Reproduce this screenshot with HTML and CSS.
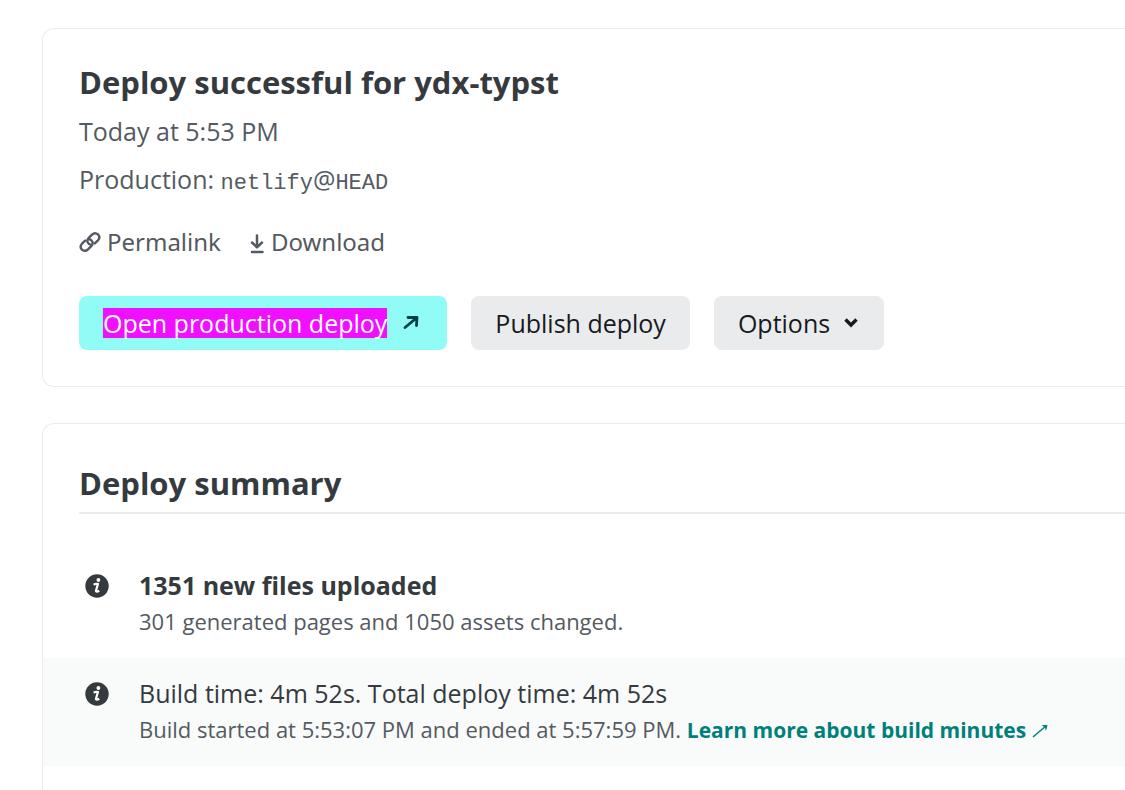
FILE: index.html
```html
<!DOCTYPE html>
<html lang="en">
<head>
<meta charset="utf-8">
<title>Deploy details</title>
<link rel="stylesheet" href="styles.css">
</head>
<body>
<main class="page">
  <section class="card deploy">
    <h1 class="title">Deploy successful for ydx-typst</h1>
    <p class="meta">Today at 5:53 PM</p>
    <p class="meta">Production: <code class="ref">netlify</code>@<code class="ref">HEAD</code></p>
    <div class="links">
      <a class="link" href="#">
        <svg class="icon-link" viewBox="0 0 22 22" aria-hidden="true"><g fill="none" stroke="currentColor" stroke-width="2.4" stroke-linecap="round" stroke-linejoin="round"><path d="M12.500 14C9 13.500 7 10 9.500 7.200L13 3.700C14.800 1.900 17.200 1.900 19 3.400C20.700 5.200 20.600 7.600 19 9.300L15.800 12.400"/><path d="M9.500 8C13 8.500 15 12 12.500 14.800L9 18.300C7.200 20.100 4.800 20.100 3 18.600C1.300 16.800 1.400 14.400 3 12.700L6.200 9.600"/></g></svg>
        Permalink</a>
      <a class="link" href="#">
        <svg class="icon-down" viewBox="0 0 16 20" aria-hidden="true"><path d="M8 1.500v11.500M3 8.500l5 4.800L13 8.500M3 18h10.500" fill="none" stroke="currentColor" stroke-width="2.500" stroke-linecap="round" stroke-linejoin="round"/></svg>
        Download</a>
    </div>
    <div class="actions">
      <button class="btn primary" type="button"><span class="selected">Open production deploy</span>
        <svg class="icon-open" viewBox="0 0 16 16" aria-hidden="true"><path d="M5 2.500h9l-.5 8M14 2.500L2 12.500" fill="none" stroke="currentColor" stroke-width="2.800" stroke-linejoin="round" stroke-linecap="round"/></svg>
      </button>
      <button class="btn" type="button">Publish deploy</button>
      <button class="btn" type="button">Options
        <svg class="icon-chevron" viewBox="0 0 14 10" aria-hidden="true"><path d="M1.500 1.500L7 7l5.500-5.500" fill="none" stroke="currentColor" stroke-width="3.400"/></svg>
      </button>
    </div>
  </section>
  <section class="card summary">
    <h2 class="title ruled">Deploy summary</h2>
    <ul class="list">
      <li class="item">
        <svg class="icon-info" viewBox="0 0 24 24" aria-hidden="true"><circle cx="12" cy="12" r="11.700" fill="#353a3e"/><circle cx="13.400" cy="6" r="1.900" fill="#fff"/><path d="M8.600 10.700C10 9.900 12 9.600 12.900 10L11 16.800C10.900 18 12.500 18 14.200 16.600" fill="none" stroke="#fff" stroke-width="2.200"/></svg>
        <div><h3 class="head strong">1351 new files uploaded</h3><p class="detail">301 generated pages and 1050 assets changed.</p></div>
      </li>
      <li class="item tinted">
        <svg class="icon-info" viewBox="0 0 24 24" aria-hidden="true"><circle cx="12" cy="12" r="11.700" fill="#353a3e"/><circle cx="13.400" cy="6" r="1.900" fill="#fff"/><path d="M8.600 10.700C10 9.900 12 9.600 12.900 10L11 16.800C10.900 18 12.500 18 14.200 16.600" fill="none" stroke="#fff" stroke-width="2.200"/></svg>
        <div><h3 class="head">Build time: 4m 52s. Total deploy time: 4m 52s</h3><p class="detail">Build started at 5:53:07 PM and ended at 5:57:59 PM. <a class="more" href="#">Learn more about build minutes <svg class="icon-ext" viewBox="0 0 16 14" aria-hidden="true"><path d="M1 13L13 2.800" fill="none" stroke="currentColor" stroke-width="1.500"/><path d="M9.500 1H15.500L14 7L12.800 3.200z" fill="currentColor"/></svg></a></p></div>
      </li>
    </ul>
  </section>
</main>
</body>
</html>
```
FILE: styles.css
```css
* { box-sizing: border-box; margin: 0; padding: 0; }
body { background: #fff; color: #353a3e; font-family: "Open Sans", "Noto Sans", sans-serif; overflow: hidden; }
.page { display: flex; flex-direction: column; gap: 36px; padding: 28px 0 0 42px; }
.card { border: 1px solid #e9ebed; border-right: 0; border-radius: 12px 0 0 12px; }
.deploy { padding: 29px 36px 36px; }
.title { padding-bottom: 1px; font-size: 31px; line-height: 48px; font-weight: 700; }
.meta { font-size: 25px; line-height: 48px; color: #545a61; }
.ref { font-family: "Liberation Mono", monospace; font-size: 22px; }
.links { display: flex; gap: 28px; padding-top: 16px; }
.link { display: flex; align-items: center; gap: 6px; font-family: "Noto Sans", sans-serif; font-size: 24px; line-height: 36px; color: #545a61; text-decoration: none; }
.icon-link { width: 22px; height: 22px; }
.icon-down { width: 16px; height: 20px; margin-top: 4px; }
.actions { display: flex; gap: 24px; padding-top: 36px; }
.btn { display: flex; align-items: center; gap: 14px; height: 54px; padding: 0 24px; border: 0; border-radius: 8px; background: #e9ebed; color: #181a1c; font: 25px/30px "Open Sans", "Noto Sans", sans-serif; }
.primary { background: #90fcf5; color: #053f3f; }
.selected { background: #f010ff; color: #fff; }
.icon-open { width: 16px; height: 16px; margin: 0 4px 0 2px; }
.icon-chevron { width: 14px; height: 10px; margin-right: 2px; }
.summary { padding-top: 35px; }
.ruled { margin-left: 36px; padding-bottom: 5px; border-bottom: 2px solid #e9ebed; }
.list { list-style: none; padding: 36px 0; }
.item { display: flex; gap: 30px; padding: 17px 36px 19px 42px; }
.tinted { background: #f9fbfa; }
.icon-info { flex: none; width: 24px; height: 24px; margin-top: 7px; }
.head { font-size: 25px; line-height: 36px; font-weight: 400; }
.strong { font-weight: 700; }
.detail { font-size: 22px; line-height: 36px; color: #545a61; }
.more { font-size: 21px; line-height: 24px; color: #00807b; font-weight: 700; text-decoration: none; }
.icon-ext { width: 16px; height: 14px; }
```
